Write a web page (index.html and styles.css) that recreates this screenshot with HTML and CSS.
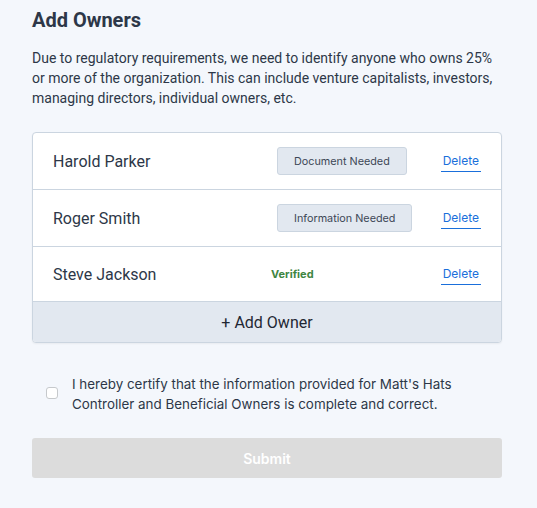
FILE: index.html
```html
<!DOCTYPE html>
<html lang="en">
<head>
<meta charset="utf-8">
<title>Add Owners</title>
<link rel="stylesheet" href="styles.css">
</head>
<body>
<main class="page">
  <h1 class="title">Add Owners</h1>
  <p class="intro">Due to regulatory requirements, we need to identify anyone who owns 25% or more of the organization. This can include venture capitalists, investors, managing directors, individual owners, etc.</p>

  <section class="owners">
    <div class="owner">
      <span class="owner-name">Harold Parker</span>
      <span class="owner-status"><span class="badge">Document Needed</span></span>
      <a class="delete" href="#">Delete</a>
    </div>
    <div class="owner">
      <span class="owner-name">Roger Smith</span>
      <span class="owner-status"><span class="badge">Information Needed</span></span>
      <a class="delete" href="#">Delete</a>
    </div>
    <div class="owner owner-last">
      <span class="owner-name">Steve Jackson</span>
      <span class="owner-status"><span class="verified">Verified</span></span>
      <a class="delete" href="#">Delete</a>
    </div>
    <button class="add-owner" type="button">+ Add Owner</button>
  </section>

  <label class="certify">
    <input class="check" type="checkbox">
    <span class="certify-text">I hereby certify that the information provided for Matt's Hats Controller and Beneficial Owners is complete and correct.</span>
  </label>

  <button class="submit" type="button" disabled>Submit</button>
</main>
</body>
</html>
```

FILE: styles.css
```css
* { box-sizing: border-box; }

html, body {
  margin: 0;
  padding: 0;
  background: #f4f7fc;
}

body {
  font-family: Roboto, "Liberation Sans", sans-serif;
  color: #2d3748;
}

.page {
  width: 470px;
  margin-left: 32px;
  padding-top: 8px;
}

.title {
  margin: 0;
  font-size: 20px;
  line-height: 24px;
  font-weight: 700;
  color: #2d3748;
}

.intro {
  margin: 16px 0 0;
  font-size: 14px;
  line-height: 20px;
  color: #2d3748;
}

.owners {
  margin-top: 24px;
  background: #ffffff;
  border: 1px solid #cbd5e0;
  border-radius: 4px;
  overflow: hidden;
  box-shadow: 0 1px 2px rgba(0, 0, 0, 0.05);
}

.owner {
  display: flex;
  align-items: center;
  height: 57px;
  padding: 0 20px;
  border-bottom: 1px solid #cbd5e0;
}

.owner-last {
  height: 55px;
}

.owner-name {
  width: 218px;
  font-size: 16px;
  color: #2d3748;
}

.owner-status {
  display: flex;
  align-items: center;
}

.badge {
  margin-left: 6px;
  height: 28px;
  padding: 0 16px;
  display: inline-flex;
  align-items: center;
  background: #e2e8f0;
  border: 1px solid #cbd5e0;
  border-radius: 3px;
  font-family: Inter, "Noto Sans", sans-serif;
  font-size: 10.8px;
  color: #3d4756;
}

.verified {
  font-family: Inter, "Noto Sans", sans-serif;
  font-size: 11px;
  font-weight: 700;
  color: #3f8542;
}

.delete {
  margin-left: auto;
  margin-top: 3px;
  padding: 0 2px 3px;
  border-bottom: 1px solid #1a6fdb;
  font-family: Inter, "Noto Sans", sans-serif;
  font-size: 12px;
  line-height: 15px;
  color: #1a6fdb;
  text-decoration: none;
}

.add-owner {
  display: block;
  width: 100%;
  height: 40px;
  margin: 0;
  border: 0;
  background: #e2e8f0;
  font-family: Roboto, "Liberation Sans", sans-serif;
  font-size: 16px;
  color: #1f2733;
  cursor: pointer;
}

.certify {
  display: flex;
  align-items: center;
  margin-top: 31px;
  padding-left: 14px;
  padding-right: 20px;
}

.check {
  appearance: none;
  -webkit-appearance: none;
  flex: none;
  width: 12px;
  height: 12px;
  margin: 0 14px 3px 0;
  background: #ffffff;
  border: 1px solid #c6c9cc;
  border-radius: 3px;
}

.certify-text {
  font-family: Inter, "Noto Sans", sans-serif;
  font-size: 13.4px;
  line-height: 20px;
  color: #2d3748;
}

.submit {
  display: block;
  width: 100%;
  height: 40px;
  margin-top: 24px;
  border: 0;
  border-radius: 3px;
  background: #dcdcdc;
  font-family: Inter, "Noto Sans", sans-serif;
  font-size: 14px;
  font-weight: 600;
  color: #ffffff;
}
```
